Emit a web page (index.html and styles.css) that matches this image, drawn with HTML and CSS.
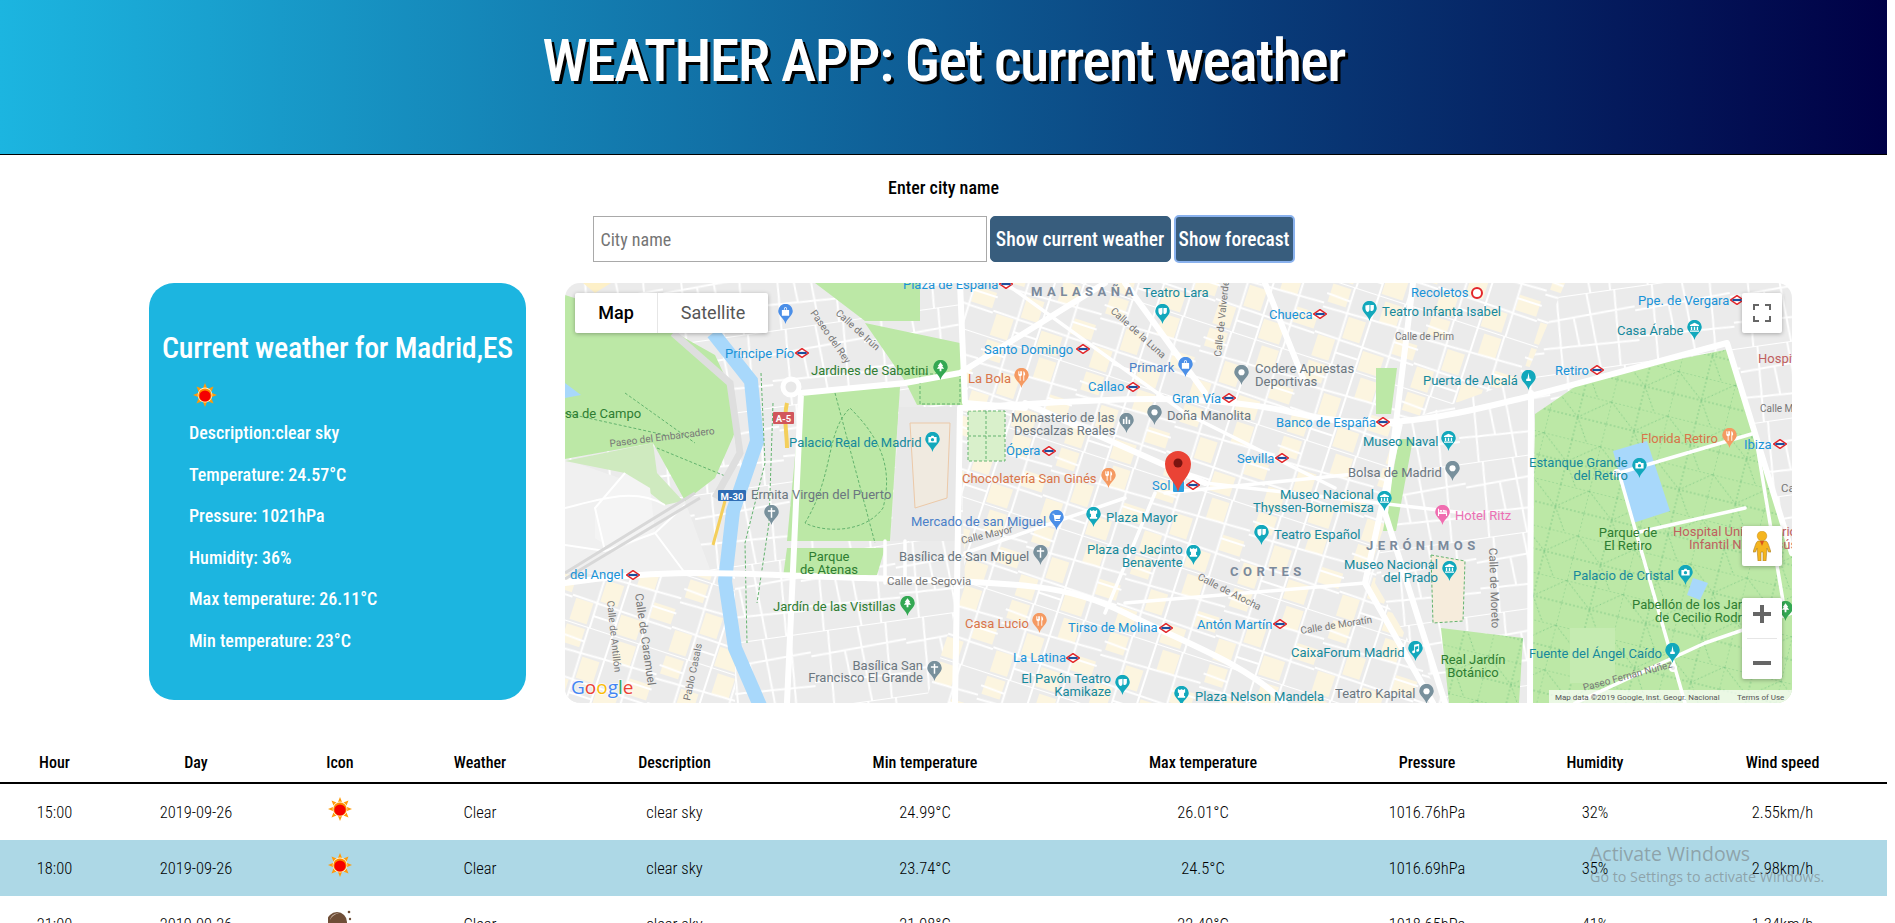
FILE: index.html
```html
<!DOCTYPE html>
<html>
  <head>
    <meta charset="utf-8">
    <title>Weather App</title>
    <link rel="stylesheet" href="styles.css">
  </head>
  <body>
    <div class="page">
      <header class="top"><h1>WEATHER APP: Get current weather</h1></header>

      <form class="search">
        <label for="city">Enter city name</label>
        <div class="search-row">
          <input id="city" type="text" placeholder="City name">
          <button type="button" class="btn btn-current">Show current weather</button>
          <button type="button" class="btn btn-focus">Show forecast</button>
        </div>
      </form>

      <svg width="0" height="0" class="defs">
        <defs>
          <symbol id="sun" viewBox="0 0 24 24">
            <path fill="#ff9a0a" d="M12 0l2 5-4 0zM12 24l-2-5 4 0zM0 12l5-2 0 4zM24 12l-5 2 0-4zM3.500 3.500l5 2-3 3zM20.500 3.500l-2 5-3-3zM3.500 20.500l2-5 3 3zM20.500 20.500l-5-2 3-3z"/>
            <circle cx="12" cy="12" r="7.400" fill="#fff3d0"/>
            <circle cx="12" cy="12" r="6.600" fill="#ff8a00"/>
            <circle cx="12" cy="13" r="5.600" fill="#f50000"/>
          </symbol>
          <symbol id="moon" viewBox="0 0 24 24">
            <circle cx="9" cy="13" r="10" fill="#6f4e37"/>
            <path fill="#c9b5a6" d="M2 11c1-5 5-7 9-7-4 1-7 3-9 7z"/>
            <circle cx="21" cy="3" r="1.300" fill="#6f4e37"/>
            <circle cx="22" cy="10" r="1.200" fill="#6f4e37"/>
          </symbol>
        </defs>
      </svg>

      <div class="main-row">
        <section class="current">
          <h2>Current weather for Madrid,ES</h2>
          <ul>
            <li class="current-icon"><svg class="sun-big"><use href="#sun"/></svg></li>
            <li>Description:clear sky</li>
            <li>Temperature: 24.57°C</li>
            <li>Pressure: 1021hPa</li>
            <li>Humidity: 36%</li>
            <li>Max temperature: 26.11°C</li>
            <li>Min temperature: 23°C</li>
          </ul>
        </section>

        <div class="map">
          <svg class="map-svg" viewBox="0 0 1227 420" width="1227" height="420">
            <defs>
              <pattern id="streets" width="96" height="76" patternUnits="userSpaceOnUse" patternTransform="rotate(-8)">
                <rect width="96" height="76" fill="#ebebeb"/>
                <path d="M0 0H96M0 24L96 20M0 50L96 54M20 0L16 76M50 0L54 76M78 0L74 76M34 22L36 52" stroke="#fff" stroke-width="2" fill="none"/>
              </pattern>
              <pattern id="blocks" width="104" height="80" patternUnits="userSpaceOnUse" patternTransform="rotate(18)">
                <rect width="104" height="80" fill="#ebebeb"/>
                <path d="M3 3H22V22H3zM58 4H76V26H58zM28 30H46V52H28zM80 36H102V52H80zM4 56H22V78H4zM52 58H74V78H52z" fill="#fcf5e0"/>
                <path d="M0 0H104M0 28L104 24M0 54L104 56M25 0L26 80M50 0L50 80M78 0L79 80M0 14L25 15M78 40H104M26 68H50" stroke="#fff" stroke-width="2" fill="none"/>
              </pattern>
              <pattern id="paths" width="58" height="46" patternUnits="userSpaceOnUse" patternTransform="rotate(14)">
                <rect width="58" height="46" fill="#bce8a6"/>
                <path d="M0 0H58M0 23H58M0 0V46M29 0V46M0 0L29 23M58 0L29 23M29 23L44 46" stroke="#78c583" stroke-width=".8" stroke-dasharray="2 2" fill="none"/>
              </pattern>
              <symbol id="metro" viewBox="0 0 14 10">
                <path d="M7 .6L13.400 5 7 9.400.6 5z" fill="#fff" stroke="#e3262a" stroke-width="1.500"/>
                <rect x="2.400" y="3.900" width="9.200" height="2.200" fill="#1d4f9c"/>
              </symbol>
              <path id="drop" d="M8 22C6.800 16 0 13 0 7.800a8 8 0 0 1 16 0C16 13 9.200 16 8 22z"/>
              <symbol id="pin-dot" viewBox="0 0 16 22"><use href="#drop"/><circle cx="8" cy="8" r="3.400" fill="#fff"/></symbol>
              <symbol id="pin-fork" viewBox="0 0 16 22"><use href="#drop"/><path fill="#fff" d="M4.500 3.500h1v3h.7v-3h1v3h.3v-3h1v4.500L7 9v5H6V9L4.500 8zM10 3.500c1.500 0 2 2 2 4l-1 1v5.500h-1z"/></symbol>
              <symbol id="pin-cam" viewBox="0 0 16 22"><use href="#drop"/><path fill="#fff" d="M3.500 5.500h2.500l1-1.500h2l1 1.500h2.500v6h-9z"/><circle cx="8" cy="8.500" r="1.800"/></symbol>
              <symbol id="pin-museum" viewBox="0 0 16 22"><use href="#drop"/><path fill="#fff" d="M8 3l5 2.500v1H3v-1zM4 7.500h1.500V11H4zM7.200 7.500h1.600V11H7.200zM10.500 7.500H12V11h-1.500zM3 11.500h10V13H3z"/></symbol>
              <symbol id="pin-theatre" viewBox="0 0 16 22"><use href="#drop"/><path fill="#fff" d="M3.500 5l4.500-1v5c0 2-1 3-2.200 3S3.500 10 3.500 8zM9 4.500h3.800V8c0 1.800-1 3-2.200 3-.5 0-1-.2-1.600-.6z"/></symbol>
              <symbol id="pin-mon" viewBox="0 0 16 22"><use href="#drop"/><path fill="#fff" d="M4 3.500h1.500v1H7v-1h2v1h1.500v-1H12v4h-1.200V11H12v2H4v-2h1.200V7.500H4z"/></symbol>
              <symbol id="pin-needle" viewBox="0 0 16 22"><use href="#drop"/><path fill="#fff" d="M8 3l1.200 6.500h1.300V12h-5V9.500h1.300z"/></symbol>
              <symbol id="pin-music" viewBox="0 0 16 22"><use href="#drop"/><path fill="#fff" d="M6.500 4L12 3v7.300a1.600 1.500 0 1 1-1-1.300V5.500L7.500 6.200v5.600a1.600 1.500 0 1 1-1-1.300z"/></symbol>
              <symbol id="pin-cross" viewBox="0 0 16 22"><use href="#drop"/><path fill="#fff" d="M7.200 3h1.600v2.800H12v1.600H8.800V14H7.200V7.400H4V5.800h3.200z"/></symbol>
              <symbol id="pin-tree" viewBox="0 0 16 22"><use href="#drop"/><path fill="#fff" d="M8 2.500l3 4H9.800l2.200 3H9v3H7v-3H4l2.200-3H5z"/></symbol>
              <symbol id="pin-bag" viewBox="0 0 16 22"><use href="#drop"/><path fill="#fff" d="M4 6.500h2.200C6.200 4 7 3.500 8 3.500s1.800.5 1.800 3H12V13H4zM7 6.500h2C9 5 8.700 4.300 8 4.300S7 5 7 6.500z"/></symbol>
              <symbol id="pin-cart" viewBox="0 0 16 22"><use href="#drop"/><path fill="#fff" d="M3.500 4H5.500l.5 1.500H13L11.500 10H7l.3 1H12v1H6L4.800 5H3.500z"/></symbol>
              <symbol id="pin-bars" viewBox="0 0 16 22"><use href="#drop"/><path fill="#fff" d="M4 6.500h1.800V12H4zM7.100 4h1.800v8H7.100zM10.200 7.500H12V12h-1.800z"/></symbol>
              <symbol id="pin-bed" viewBox="0 0 16 22"><use href="#drop"/><path fill="#fff" d="M3 4h1.200v4H13v4h-1.200v-2H4.200v2H3zM5 5.500h2.500V7.500H5zM8.300 5.200l4.700 1v1.300H8.300z"/></symbol>
            </defs>

            <rect width="1227" height="420" fill="url(#streets)"/>
            <path fill="#f0f0f0" d="M0 176L120 218 150 300 0 300z"/>
            <path fill="url(#blocks)" d="M395 0H1000L960 95 835 140 810 300 880 420H360L400 300 395 130z"/>
            <rect x="0" y="290" width="170" height="130" fill="url(#blocks)"/>

            <path fill="#bce8a6" d="M0 12L100 44 150 72 170 115 172 145 150 195 120 218 88 160 0 176z"/>
            <path fill="#fdf0c8" d="M18 0H46L30 10z"/>
            <path fill="#cfeabf" d="M0 178L88 160 92 190 118 218 100 222 60 190z"/>
            <path fill="#f4f4f4" d="M30 225L60 190 85 205 90 250 50 268 30 255z"/>
            <path fill="#bce8a6" d="M236 110L335 104 325 258 222 258z"/>
            <path fill="#bce8a6" d="M222 265H320L312 292 218 294zM300 40L395 60 400 122 352 122 340 98zM250 0H355V38L300 38z"/>
            <path fill="#d9f0cb" d="M403 128H440V178H403z"/>
            <path fill="#e8e8e8" d="M334 124H395L391 258H326z"/>
            <path fill="#f0eae0" stroke="#ecc9a8" d="M345 140H385L382 215 350 225z"/>
            <path fill="none" stroke="#63b36e" stroke-dasharray="3 2" d="M240 240C270 190 260 150 285 125 310 150 330 180 318 225 300 250 260 250 240 240zM270 110L310 260M355 91H395V121H355zM403 128H440V178H403zM403 153H440M421 128V178M0 130L100 152M92 165L165 195M60 110L130 160"/>

            <g fill="none" stroke="#fff" stroke-width="2">
              <path d="M0 225C40 215 70 205 100 222M40 268L30 225 60 190M0 262L40 268 90 250 120 290M90 250L120 222"/>
            </g>
            <path stroke="#dedede" stroke-width="7" fill="none" d="M108 50L165 100 175 170 150 215"/>
            <path stroke="#d8d8d8" stroke-width="3" fill="none" d="M0 296L135 215M0 290L130 210"/>
            <path stroke="#a8d8fb" stroke-width="14" fill="none" d="M148 50L186 98 192 158 168 228 160 298 170 365 196 425"/>
            <path fill="#a8d8fb" d="M0 100L16 112 0 115z"/>
            <path stroke="#63b36e" stroke-dasharray="3 2" fill="none" d="M196 90L200 180 180 260 182 360M208 120L204 240 192 320"/>

            <path fill="url(#paths)" d="M970 131L1023 95 1164 66 1227 262V420H966z"/>
            <path fill="#c5ebb1" d="M1005 345H1050V400H1005z"/>
            <path fill="#a8d8fb" d="M1048 168L1082 158 1105 228 1068 240z"/>
            <path fill="#a8d8fb" d="M1128 295L1143 300 1135 317 1122 312z"/>
            <path fill="url(#paths)" d="M876 345L958 355 954 420H884z"/>
            <path fill="#bce8a6" d="M834 156H848L831 248H818zM811 85H832L826 131H811z"/>
            <path fill="#f6ecdc" stroke="#63b36e" stroke-dasharray="3 2" d="M866 272L900 278 898 338 868 340z"/>

            <g fill="none" stroke="#fff" stroke-linecap="round" stroke-linejoin="round">
              <path stroke-width="6" d="M0 300C100 285 150 290 300 295S500 300 560 330 680 380 720 420M222 420L236 110M236 110L340 100 395 90M395 0L400 120 460 125M540 0L395 90M395 125L390 420M560 0L640 110M395 125C500 120 620 105 730 130S900 130 1162 60M700 0L740 100M835 140L800 300 868 420M848 0L820 230 880 420M966 110L965 420M1162 60L1227 270M460 120L640 200"/>
              <path stroke-width="3.500" d="M1054 190L1190 150M1054 190L1120 420M1190 150L1220 330M1070 250L1180 225M1010 420L1140 360 1227 330M320 258V300M340 258V300M600 210L800 190M640 200L900 230M560 320L800 300M400 270L560 215M590 210L540 330M440 0L620 130M620 130L770 205"/>
            </g>
            <circle cx="226" cy="104" r="8" fill="#e8e8e8" stroke="#fff" stroke-width="5"/>
            <circle cx="1052" cy="190" r="3" fill="#e8e8e8" stroke="#fff" stroke-width="2"/>
            <circle cx="1108" cy="385" r="3" fill="#e8e8e8" stroke="#fff" stroke-width="2"/>

            <path d="M222 120C218 135 222 150 222 165" stroke="#f4cf5b" stroke-width="4" fill="none"/>
            <path d="M160 218L148 262" stroke="#f4cf5b" stroke-width="3" fill="none"/>

            <rect class="shield-red" x="208" y="129" width="21" height="12" rx="1"/>
            <text class="shield" x="218.500" y="139">A-5</text>
            <rect class="shield-blue" x="153" y="207" width="28" height="11" rx="1"/>
            <text class="shield" x="167" y="216.500">M-30</text>

            <g class="blue-l">
              <text x="338" y="6">Plaza de España</text>
              <text x="419" y="71">Santo Domingo</text>
              <text x="160" y="75">Príncipe Pío</text>
              <text x="523" y="108">Callao</text>
              <text x="607" y="120">Gran Vía</text>
              <text x="441" y="172">Ópera</text>
              <text x="587" y="207">Sol</text>
              <text x="5" y="296">del Angel</text>
              <text x="503" y="349">Tirso de Molina</text>
              <text x="448" y="379">La Latina</text>
              <text x="846" y="14">Recoletos</text>
              <text x="1073" y="22">Ppe. de Vergara</text>
              <text x="704" y="36">Chueca</text>
              <text x="990" y="92">Retiro</text>
              <text x="711" y="144">Banco de España</text>
              <text x="1179" y="166">Ibiza</text>
              <text x="672" y="180">Sevilla</text>
              <text x="632" y="346">Antón Martín</text>
            </g>
            <g class="teal-l">
              <text x="578" y="14">Teatro Lara</text>
              <text x="224" y="164">Palacio Real de Madrid</text>
              <text x="541" y="239">Plaza Mayor</text>
              <text x="522" y="271">Plaza de Jacinto</text>
              <text x="557" y="284">Benavente</text>
              <text x="546" y="400" text-anchor="end">El Pavón Teatro</text>
              <text x="546" y="413" text-anchor="end">Kamikaze</text>
              <text x="630" y="418">Plaza Nelson Mandela</text>
              <text x="817" y="33">Teatro Infanta Isabel</text>
              <text x="1052" y="52">Casa Árabe</text>
              <text x="858" y="102">Puerta de Alcalá</text>
              <text x="798" y="163">Museo Naval</text>
              <text x="964" y="184">Estanque Grande</text>
              <text x="1063" y="197" text-anchor="end">del Retiro</text>
              <text x="715" y="216">Museo Nacional</text>
              <text x="688" y="229">Thyssen-Bornemisza</text>
              <text x="709" y="256">Teatro Español</text>
              <text x="873" y="286" text-anchor="end">Museo Nacional</text>
              <text x="873" y="299" text-anchor="end">del Prado</text>
              <text x="1008" y="297">Palacio de Cristal</text>
              <text x="726" y="374">CaixaForum Madrid</text>
              <text x="964" y="375">Fuente del Ángel Caído</text>
            </g>
            <g class="green-l">
              <text x="246" y="92">Jardines de Sabatini</text>
              <text x="0" y="135">sa de Campo</text>
              <text x="264" y="278" text-anchor="middle">Parque</text>
              <text x="264" y="291" text-anchor="middle">de Atenas</text>
              <text x="208" y="328">Jardín de las Vistillas</text>
              <text x="1063" y="254" text-anchor="middle">Parque de</text>
              <text x="1063" y="267" text-anchor="middle">El Retiro</text>
              <text x="1067" y="326">Pabellón de los Jardines</text>
              <text x="1090" y="339">de Cecilio Rodríguez</text>
              <text x="908" y="381" text-anchor="middle">Real Jardín</text>
              <text x="908" y="394" text-anchor="middle">Botánico</text>
            </g>
            <g class="grey-l">
              <text x="446" y="139">Monasterio de las</text>
              <text x="449" y="152">Descalzas Reales</text>
              <text x="602" y="137">Doña Manolita</text>
              <text x="186" y="216">Ermita Virgen del Puerto</text>
              <text x="334" y="278">Basílica de San Miguel</text>
              <text x="358" y="387" text-anchor="end">Basílica San</text>
              <text x="358" y="399" text-anchor="end">Francisco El Grande</text>
              <text x="690" y="90">Codere Apuestas</text>
              <text x="690" y="103">Deportivas</text>
              <text x="783" y="194">Bolsa de Madrid</text>
              <text x="770" y="415">Teatro Kapital</text>
            </g>
            <g class="orange-l">
              <text x="403" y="100">La Bola</text>
              <text x="397" y="200">Chocolatería San Ginés</text>
              <text x="400" y="345">Casa Lucio</text>
              <text x="1076" y="160">Florida Retiro</text>
            </g>
            <g class="red-l">
              <text x="1193" y="80">Hospital</text>
              <text x="1108" y="253">Hospital Universitario</text>
              <text x="1124" y="266">Infantil Niño Jesús</text>
            </g>
            <text class="shop-l" x="564" y="89">Primark</text>
            <text class="shop-l" x="346" y="243">Mercado de san Miguel</text>
            <text class="pink-l" x="890" y="237">Hotel Ritz</text>
            <text class="area-l" x="466" y="13">MALASAÑA</text>
            <text class="area-l" x="801" y="267">JERÓNIMOS</text>
            <text class="area-l" x="665" y="293">CORTES</text>

            <g class="street-l">
              <text x="45" y="164" transform="rotate(-7 45 164)">Paseo del Embarcadero</text>
              <text x="397" y="261" transform="rotate(-13 397 261)">Calle Mayor</text>
              <text x="322" y="302" class="street-big">Calle de Segovia</text>
              <text x="42" y="318" transform="rotate(84 42 318)">Calle de Antillón</text>
              <text x="70" y="311" transform="rotate(82 70 311)" class="street-big">Calle de Caramuel</text>
              <text x="125" y="418" transform="rotate(-78 125 418)">Pablo Casals</text>
              <text x="830" y="57">Calle de Prim</text>
              <text x="656" y="74" transform="rotate(-84 656 74)">Calle de Valverde</text>
              <text x="1195" y="129">Calle Me</text>
              <text x="1216" y="209" class="street-big">Ca</text>
              <text x="924" y="265" transform="rotate(88 924 265)" class="street-big">Calle de Moreto</text>
              <text x="632" y="296" transform="rotate(27 632 296)">Calle de Atocha</text>
              <text x="736" y="351" transform="rotate(-9 736 351)">Calle de Moratín</text>
              <text x="1019" y="408" transform="rotate(-15 1019 408)">Paseo Fernán Núñez</text>
              <text x="545" y="29" transform="rotate(42 545 29)">Calle de la Luna</text>
              <text x="270" y="31" transform="rotate(42 270 31)">Calle de Irún</text>
              <text x="245" y="30" transform="rotate(55 245 30)">Paseo del Rey</text>
            </g>

            <g class="pin-teal">
              <use href="#pin-theatre" x="590" y="21" width="15" height="20"/>
              <use href="#pin-cam" x="360" y="149" width="15" height="20"/>
              <use href="#pin-mon" x="521" y="224" width="15" height="20"/>
              <use href="#pin-mon" x="621" y="262" width="15" height="20"/>
              <use href="#pin-theatre" x="550" y="392" width="15" height="20"/>
              <use href="#pin-mon" x="609" y="403" width="15" height="20"/>
              <use href="#pin-theatre" x="797" y="18" width="15" height="20"/>
              <use href="#pin-museum" x="1122" y="37" width="15" height="20"/>
              <use href="#pin-needle" x="956" y="87" width="15" height="20"/>
              <use href="#pin-museum" x="876" y="148" width="15" height="20"/>
              <use href="#pin-cam" x="1067" y="175" width="15" height="20"/>
              <use href="#pin-museum" x="812" y="208" width="15" height="20"/>
              <use href="#pin-theatre" x="689" y="242" width="15" height="20"/>
              <use href="#pin-museum" x="877" y="278" width="15" height="20"/>
              <use href="#pin-cam" x="1113" y="282" width="15" height="20"/>
              <use href="#pin-music" x="843" y="358" width="15" height="20"/>
              <use href="#pin-needle" x="1100" y="360" width="15" height="20"/>
            </g>
            <g class="pin-blue">
              <use href="#pin-bag" x="213" y="21" width="15" height="20"/>
              <use href="#pin-bag" x="613" y="74" width="15" height="20"/>
              <use href="#pin-cart" x="484" y="227" width="15" height="20"/>
            </g>
            <g class="pin-green">
              <use href="#pin-tree" x="368" y="77" width="15" height="20"/>
              <use href="#pin-tree" x="335" y="313" width="15" height="20"/>
              <use href="#pin-tree" x="1213" y="318" width="15" height="20"/>
            </g>
            <g class="pin-orange">
              <use href="#pin-fork" x="449" y="85" width="15" height="20"/>
              <use href="#pin-fork" x="536" y="185" width="15" height="20"/>
              <use href="#pin-fork" x="467" y="330" width="15" height="20"/>
              <use href="#pin-fork" x="1157" y="145" width="15" height="20"/>
            </g>
            <g class="pin-grey">
              <use href="#pin-bars" x="554" y="130" width="15" height="20"/>
              <use href="#pin-dot" x="582" y="122" width="15" height="20"/>
              <use href="#pin-cross" x="199" y="222" width="15" height="20"/>
              <use href="#pin-cross" x="468" y="262" width="15" height="20"/>
              <use href="#pin-cross" x="362" y="378" width="15" height="20"/>
              <use href="#pin-dot" x="669" y="82" width="15" height="20"/>
              <use href="#pin-dot" x="880" y="178" width="15" height="20"/>
              <use href="#pin-dot" x="854" y="401" width="15" height="20"/>
            </g>
            <g class="pin-pink">
              <use href="#pin-bed" x="870" y="222" width="15" height="20"/>
            </g>

            <use href="#metro" x="230" y="65" width="14" height="10"/>
            <use href="#metro" x="511" y="61" width="14" height="10"/>
            <use href="#metro" x="561" y="99" width="14" height="10"/>
            <use href="#metro" x="477" y="163" width="14" height="10"/>
            <use href="#metro" x="621" y="197" width="14" height="10"/>
            <use href="#metro" x="61" y="287" width="14" height="10"/>
            <use href="#metro" x="594" y="340" width="14" height="10"/>
            <use href="#metro" x="501" y="370" width="14" height="10"/>
            <use href="#metro" x="434" y="-4" width="14" height="10"/>
            <use href="#metro" x="748" y="26" width="14" height="10"/>
            <use href="#metro" x="657" y="110" width="14" height="10"/>
            <use href="#metro" x="811" y="134" width="14" height="10"/>
            <use href="#metro" x="710" y="170" width="14" height="10"/>
            <use href="#metro" x="1025" y="82" width="14" height="10"/>
            <use href="#metro" x="1165" y="12" width="14" height="10"/>
            <use href="#metro" x="1208" y="156" width="14" height="10"/>
            <use href="#metro" x="708" y="336" width="14" height="10"/>
            <circle cx="912" cy="10" r="5" fill="#fff" stroke="#e3262a" stroke-width="2"/>

            <rect x="608" y="198" width="11" height="11" rx="1" fill="#2a9fe0"/>
            <path d="M613 209C611 199 600 193 600 181a13 13 0 0 1 26 0c0 12-11 18-13 28z" fill="#ea4335"/>
            <circle cx="613" cy="180" r="4.500" fill="#7b1410"/>

            <text class="google" x="6" y="411"><tspan fill="#4285f4">G</tspan><tspan fill="#ea4335">o</tspan><tspan fill="#fbbc05">o</tspan><tspan fill="#4285f4">g</tspan><tspan fill="#34a853">l</tspan><tspan fill="#ea4335">e</tspan></text>

            <rect x="984" y="407" width="243" height="13" fill="#fff" opacity=".7"/>
            <text class="attrib" x="990" y="417">Map data ©2019 Google, Inst. Geogr. Nacional</text>
            <text class="attrib" x="1172" y="417">Terms of Use</text>
          </svg>

          <div class="map-type">
            <span class="map-type-on">Map</span>
            <span class="map-type-off">Satellite</span>
          </div>
          <div class="map-ctl map-full">
            <svg viewBox="0 0 18 18" width="18" height="18"><path d="M0 6V0H6V2H2V6zM12 0H18V6H16V2H12zM0 12H2V16H6V18H0zM16 12H18V18H12V16H16z" fill="#666"/></svg>
          </div>
          <div class="map-ctl map-peg">
            <svg viewBox="0 0 18 30" width="18" height="30">
              <circle cx="9" cy="5" r="4.800" fill="#f5b51e" stroke="#c98b13" stroke-width=".5"/>
              <path d="M5 10H13C15 11 15.500 14 18 21H15.500L14 17 13 30H10V21H8V30H5L4 17 2.500 21H0C2.500 14 3 11 5 10z" fill="#f5b51e" stroke="#a97f2a" stroke-width=".6"/>
              <path d="M7 10H11L9 15z" fill="#d8541e"/>
            </svg>
          </div>
          <div class="map-ctl map-zoom">
            <svg viewBox="0 0 18 18" width="18" height="18"><path d="M7 0H11V7H18V11H11V18H7V11H0V7H7z" fill="#666"/></svg>
            <i></i>
            <svg viewBox="0 0 18 18" width="18" height="18"><rect y="7" width="18" height="4" fill="#666"/></svg>
          </div>
        </div>
      </div>

      <table class="forecast">
        <colgroup>
          <col class="c-hour"><col class="c-day"><col class="c-icon"><col class="c-weather"><col class="c-desc">
          <col class="c-temp"><col class="c-temp"><col class="c-press"><col class="c-hum"><col class="c-wind">
        </colgroup>
        <thead>
          <tr><th>Hour</th><th>Day</th><th>Icon</th><th>Weather</th><th>Description</th><th>Min temperature</th><th>Max temperature</th><th>Pressure</th><th>Humidity</th><th>Wind speed</th></tr>
        </thead>
        <tbody>
          <tr><td>15:00</td><td>2019-09-26</td><td><svg class="sun-small"><use href="#sun"/></svg></td><td>Clear</td><td>clear sky</td><td>24.99°C</td><td>26.01°C</td><td>1016.76hPa</td><td>32%</td><td>2.55km/h</td></tr>
          <tr class="alt"><td>18:00</td><td>2019-09-26</td><td><svg class="sun-small"><use href="#sun"/></svg></td><td>Clear</td><td>clear sky</td><td>23.74°C</td><td>24.5°C</td><td>1016.69hPa</td><td>35%</td><td>2.98km/h</td></tr>
          <tr><td>21:00</td><td>2019-09-26</td><td><svg class="sun-small"><use href="#moon"/></svg></td><td>Clear</td><td>clear sky</td><td>21.98°C</td><td>22.49°C</td><td>1018.65hPa</td><td>41%</td><td>1.34km/h</td></tr>
        </tbody>
      </table>
    </div>

    <div class="activate">
      <p class="activate-big">Activate Windows</p>
      <p class="activate-small">Go to Settings to activate Windows.</p>
    </div>
  </body>
</html>
```

FILE: styles.css
```css
html, body {
    margin: 0;
    padding: 0;
    height: 923px;
    overflow: hidden;
    background: #fff;
    font-family: "Roboto Condensed", Roboto, sans-serif;
    color: #000;
}
.page {
    width: 1887px;
}
.defs {
    position: absolute;
}

/* header */
.top {
    height: 154px;
    border-bottom: 1px solid #000;
    background: linear-gradient(to right, #1cb5e0, #000046);
    display: flex;
    justify-content: center;
}
.top h1 {
    margin: 31px 0 0 0;
    font-size: 60px;
    line-height: 60px;
    font-weight: 500;
    letter-spacing: -1.600px;
    color: #fff;
    text-shadow: 3px 3px 0 #000;
}

/* search */
.search {
    display: flex;
    flex-direction: column;
    align-items: center;
    padding-top: 22px;
}
.search label {
    font-size: 18px;
    line-height: 21px;
    font-weight: 500;
}
.search-row {
    display: flex;
    align-items: center;
    gap: 3px;
    margin-top: 17px;
}
.search input {
    width: 394px;
    height: 46px;
    box-sizing: border-box;
    border: 1px solid #a9a9a9;
    padding: 0 7px;
    font: 18px "Roboto Condensed", Roboto, sans-serif;
}
.search input::placeholder {
    color: #757575;
}
.btn {
    height: 46px;
    box-sizing: border-box;
    padding: 0;
    border: 1px solid #385d7d;
    border-radius: 5px;
    background: #385d7d;
    color: #fff;
    font: 500 19.500px "Roboto Condensed", Roboto, sans-serif;
}
.btn-current {
    width: 181px;
}
.btn-focus {
    width: 121px;
    height: 48px;
    border: 2px solid #8ab2ee;
}

/* main row */
.main-row {
    display: grid;
    grid-template-columns: 377px 1227px;
    column-gap: 39px;
    padding: 20px 0 0 149px;
    align-items: start;
}
.current {
    height: 417px;
    box-sizing: border-box;
    padding-top: 47px;
    border-radius: 25px;
    background: #1cb5e0;
    color: #fff;
}
.current h2 {
    margin: 0;
    font-size: 30px;
    line-height: 36px;
    font-weight: 500;
    letter-spacing: -.3px;
    text-align: center;
}
.current ul {
    list-style: none;
    margin: 17px 0 0 40px;
    padding: 0;
}
.current li {
    height: 41.600px;
    line-height: 41.600px;
    font-size: 18px;
    font-weight: 500;
}
.current li.current-icon {
    height: 29px;
    line-height: 0;
}
.sun-big {
    width: 24px;
    height: 24px;
    margin-left: 4px;
}

/* map */
.map {
    position: relative;
    width: 1227px;
    height: 420px;
    border-radius: 15px;
    overflow: hidden;
}
.map-svg {
    display: block;
    font-family: Roboto, sans-serif;
    font-size: 13px;
}
.blue-l { fill: #1a93d8; }
.teal-l { fill: #16899c; }
.green-l { fill: #2e7d32; }
.grey-l { fill: #6b7780; }
.orange-l { fill: #d9754a; }
.red-l { fill: #c0605f; }
.shop-l { fill: #4a80c8; }
.pink-l { fill: #ec6fb4; }
.area-l {
    fill: #7b8a9c;
    font-size: 13px;
    font-weight: bold;
    letter-spacing: 4.500px;
}
.street-l {
    fill: #777;
    font-size: 10px;
}
.street-big {
    font-size: 11.500px;
}
.shield {
    fill: #fff;
    font-size: 9.500px;
    font-weight: bold;
    text-anchor: middle;
}
.shield-red { fill: #d1565c; }
.shield-blue { fill: #2f6db5; }
.pin-teal { fill: #12a8bc; }
.pin-blue { fill: #4b8fe8; }
.pin-green { fill: #34a853; }
.pin-orange { fill: #f59a62; }
.pin-grey { fill: #78909c; }
.pin-pink { fill: #f06db0; }
.google {
    font-family: "Open Sans", sans-serif;
    font-size: 19px;
    font-weight: 500;
    paint-order: stroke;
    stroke: rgba(255, 255, 255, .6);
    stroke-width: 2px;
}
.attrib {
    font-size: 8px;
    fill: #555;
}
.map-type {
    position: absolute;
    top: 10px;
    left: 10px;
    display: flex;
    height: 40px;
    background: #fff;
    border-radius: 2px;
    box-shadow: 0 1px 4px rgba(0, 0, 0, .3);
    font: 18px/40px Roboto, sans-serif;
}
.map-type-on {
    width: 82px;
    text-align: center;
    color: #000;
    font-weight: 500;
    border-right: 1px solid #e6e6e6;
}
.map-type-off {
    width: 110px;
    text-align: center;
    color: #565656;
}
.map-ctl {
    position: absolute;
    right: 10px;
    width: 40px;
    background: #fff;
    border-radius: 2px;
    box-shadow: 0 1px 4px rgba(0, 0, 0, .3);
    display: flex;
    flex-direction: column;
    align-items: center;
    justify-content: center;
}
.map-full {
    top: 10px;
    height: 40px;
}
.map-peg {
    top: 243px;
    height: 40px;
}
.map-zoom {
    top: 315px;
    height: 81px;
    justify-content: space-around;
}
.map-zoom i {
    width: 30px;
    height: 1px;
    background: #e6e6e6;
}

/* table */
.forecast {
    width: 1887px;
    margin-top: 40px;
    table-layout: fixed;
    border-collapse: collapse;
    font-size: 16.500px;
}
.c-hour { width: 109px; }
.c-day { width: 174px; }
.c-icon { width: 114px; }
.c-weather { width: 166px; }
.c-desc { width: 223px; }
.c-temp { width: 278px; }
.c-press { width: 170px; }
.c-hum { width: 166px; }
.c-wind { width: 209px; }
.forecast th {
    height: 39px;
    padding: 0;
    font-size: 16px;
    font-weight: 500;
    border-bottom: 2px solid #000;
}
.forecast td {
    height: 56px;
    padding: 0;
    text-align: center;
    font-weight: 300;
}
.forecast tr.alt td {
    background: #add8e6;
}
.sun-small {
    display: block;
    width: 24px;
    height: 24px;
    margin: -6px auto 0;
}

/* watermark */
.activate {
    position: absolute;
    left: 1590px;
    top: 840px;
    color: rgba(110, 110, 110, .5);
    font-family: "Open Sans", sans-serif;
}
.activate p {
    margin: 0;
}
.activate-big {
    font-size: 19.500px;
    line-height: 27px;
}
.activate-small {
    font-size: 14.300px;
    line-height: 20px;
}
```
